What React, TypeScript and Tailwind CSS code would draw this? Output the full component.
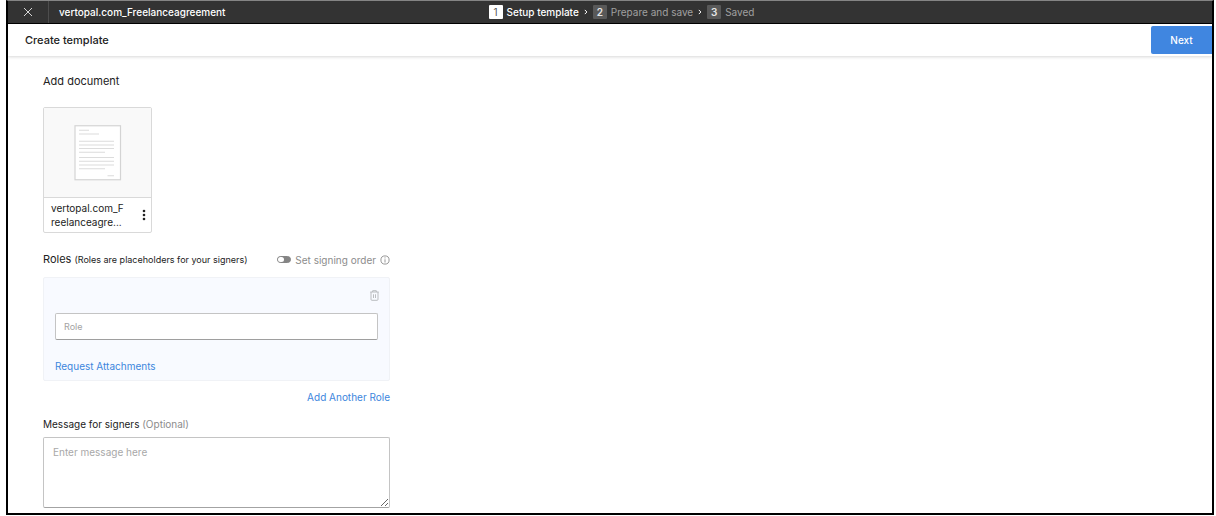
import { Fragment } from "react";

const steps = [
  { number: 1, label: "Setup template", active: true },
  { number: 2, label: "Prepare and save", active: false },
  { number: 3, label: "Saved", active: false },
];

function CloseIcon() {
  return (
    <svg width="10" height="10" viewBox="0 0 10 10" fill="none" stroke="#d6d6d6" strokeWidth="1" aria-hidden="true">
      <path d="M1 1l8 8M9 1L1 9" />
    </svg>
  );
}

function ChevronIcon() {
  return (
    <svg width="4" height="6" viewBox="0 0 4 6" fill="none" stroke="#ffffff" strokeWidth="1" aria-hidden="true">
      <path d="M0.8 0.9L2.900 3L0.8 5.1" />
    </svg>
  );
}

function DocumentIcon() {
  return (
    <svg width="48" height="56" viewBox="0 0 48 56" fill="none" aria-hidden="true">
      <rect x="1" y="0.75" width="45.5" height="54" fill="#ffffff" stroke="#d4d4d4" strokeWidth="1.2" />
      <g stroke="#dcdcdc" strokeWidth="1.1">
        <path d="M5 5.3h10M5 9h20M5 16.3h35M5 20h35M5 23.5h35M5 27.2h26M5 32.5h35M5 36.2h35M5 40h35M5 43.7h26M33.500 50.700h6.500" />
      </g>
    </svg>
  );
}

function MoreIcon() {
  return (
    <svg width="4" height="12" viewBox="0 0 4 12" fill="#222222" aria-hidden="true">
      <circle cx="2" cy="2" r="1.3" />
      <circle cx="2" cy="6" r="1.3" />
      <circle cx="2" cy="10" r="1.3" />
    </svg>
  );
}

function InfoIcon() {
  return (
    <svg width="10" height="10" viewBox="0 0 10 10" fill="none" stroke="#8c8c8c" strokeWidth="0.9" aria-hidden="true">
      <circle cx="5" cy="5" r="4.1" />
      <path d="M5 4.300v3.200M5 2.400v1" />
    </svg>
  );
}

function TrashIcon() {
  return (
    <svg width="9" height="11" viewBox="0 0 9 11" fill="none" stroke="#b3b5b9" strokeWidth="0.9" aria-hidden="true">
      <path d="M0.300 2h8.400M2.700 2V0.700h3.600V2M1 2v7.400q0 0.900 0.900 0.900h5.200q0.900 0 0.900-0.900V2M3.500 4.300v3.700M5.500 4.300v3.700" />
    </svg>
  );
}

export default function App() {
  return (
    <div className="ml-[6px] mr-[2px] border-x-2 border-b-2 border-t border-black border-t-[#858585] bg-white font-['Inter',sans-serif] text-[#222222]">
      <header className="flex h-[23px] border-b border-black bg-[#333333] text-[10px] leading-[22px] text-white">
        <button type="button" aria-label="Close" className="flex w-[41px] shrink-0 items-center justify-center border-r border-[#4d4d4d]">
          <CloseIcon />
        </button>
        <div className="grid flex-1 grid-cols-[1fr_auto_1fr] items-center pl-[10px] pr-7">
          <span className="font-medium">vertopal.com_Freelanceagreement</span>
          <ol className="flex items-center gap-[5px]">
            {steps.map((step, index) => (
              <Fragment key={step.number}>
                {index > 0 && (
                  <li aria-hidden="true">
                    <ChevronIcon />
                  </li>
                )}
                <li
                  aria-current={step.active ? "step" : undefined}
                  className={step.active ? "flex items-center gap-1 font-medium text-white" : "flex items-center gap-1 text-[#a0a0a0]"}
                >
                  <span
                    className={
                      step.active
                        ? "flex h-[14px] w-[14px] items-center justify-center rounded-[1px] bg-white font-normal text-[#555555]"
                        : "flex h-[14px] w-[14px] items-center justify-center rounded-[1px] bg-[#595959] font-semibold text-[#e6e6e6]"
                    }
                  >
                    {step.number}
                  </span>
                  <span>{step.label}</span>
                </li>
              </Fragment>
            ))}
          </ol>
        </div>
      </header>

      <div className="flex h-8 items-center justify-between pl-[17px] shadow-[0_1px_3px_rgba(0,0,0,0.16)]">
        <h1 className="text-[11px] font-medium leading-4">Create template</h1>
        <button type="button" className="h-7 w-[61px] rounded-l-[2px] bg-[#4086e0] text-[10px] font-medium text-white">
          Next
        </button>
      </div>

      <main className="ml-[35px] max-w-[347px] pb-[5px] pt-[17px]">
        <h2 className="text-[11px] leading-4">Add document</h2>

        <article className="mt-[18px] w-[109px] rounded-[2px] border border-[#d9d9d9]">
          <div className="flex h-[90px] items-center justify-center border-b border-[#d9d9d9] bg-[#f9f9f9]">
            <DocumentIcon />
          </div>
          <div className="flex h-[34px] items-center justify-between pl-[7px] pr-[5px]">
            <p className="text-[10px] leading-[14px]">
              vertopal.com_F
              <br />
              reelanceagre...
            </p>
            <button type="button" aria-label="Document options">
              <MoreIcon />
            </button>
          </div>
        </article>

        <div className="mt-[18px] flex items-center justify-between leading-4">
          <h2 className="text-[11px]">
            Roles <span className="text-[9px]">(Roles are placeholders for your signers)</span>
          </h2>
          <div className="flex items-center gap-1 text-[#8c8c8c]">
            <label className="flex items-center gap-1 text-[10px]">
              <input
                type="checkbox"
                className="h-[7px] w-[14px] appearance-none rounded-full border border-[#858585] bg-[#858585] before:block before:h-[5px] before:w-[6px] before:rounded-full before:bg-white checked:before:ml-auto"
              />
              Set signing order
            </label>
            <button type="button" aria-label="About signing order">
              <InfoIcon />
            </button>
          </div>
        </div>

        <section className="mt-[9px] rounded-[2px] border border-[#f0f2f6] bg-[#f8faff] px-[11px] pb-[6px] pt-3">
          <div className="flex justify-end">
            <button type="button" aria-label="Delete role" className="mr-[-1px]">
              <TrashIcon />
            </button>
          </div>
          <input
            type="text"
            aria-label="Role"
            placeholder="Role"
            className="mt-3 block h-[27px] w-full rounded-[2px] border border-[#c4c4c4] border-b-[#9e9e9e] bg-white px-2 text-[9px] placeholder:text-[#a3a3a3]"
          />
          <button type="button" className="mt-[18px] block text-[10px] leading-4 text-[#3c86dd]">
            Request Attachments
          </button>
        </section>
        <div className="mt-2 flex justify-end">
          <button type="button" className="text-[10px] leading-4 text-[#3c86dd]">
            Add Another Role
          </button>
        </div>

        <label htmlFor="message" className="mt-[11px] block text-[10px] leading-4">
          Message for signers <span className="text-[#8c8c8c]">(Optional)</span>
        </label>
        <textarea
          id="message"
          placeholder="Enter message here"
          className="mt-[5px] block h-[71px] w-full resize-y rounded-[2px] border border-[#c4c4c4] border-b-[#a3a3a3] bg-white px-[9px] py-[6px] text-[10px] leading-4 placeholder:text-[#a8a8a8]"
        />
      </main>
    </div>
  );
}
